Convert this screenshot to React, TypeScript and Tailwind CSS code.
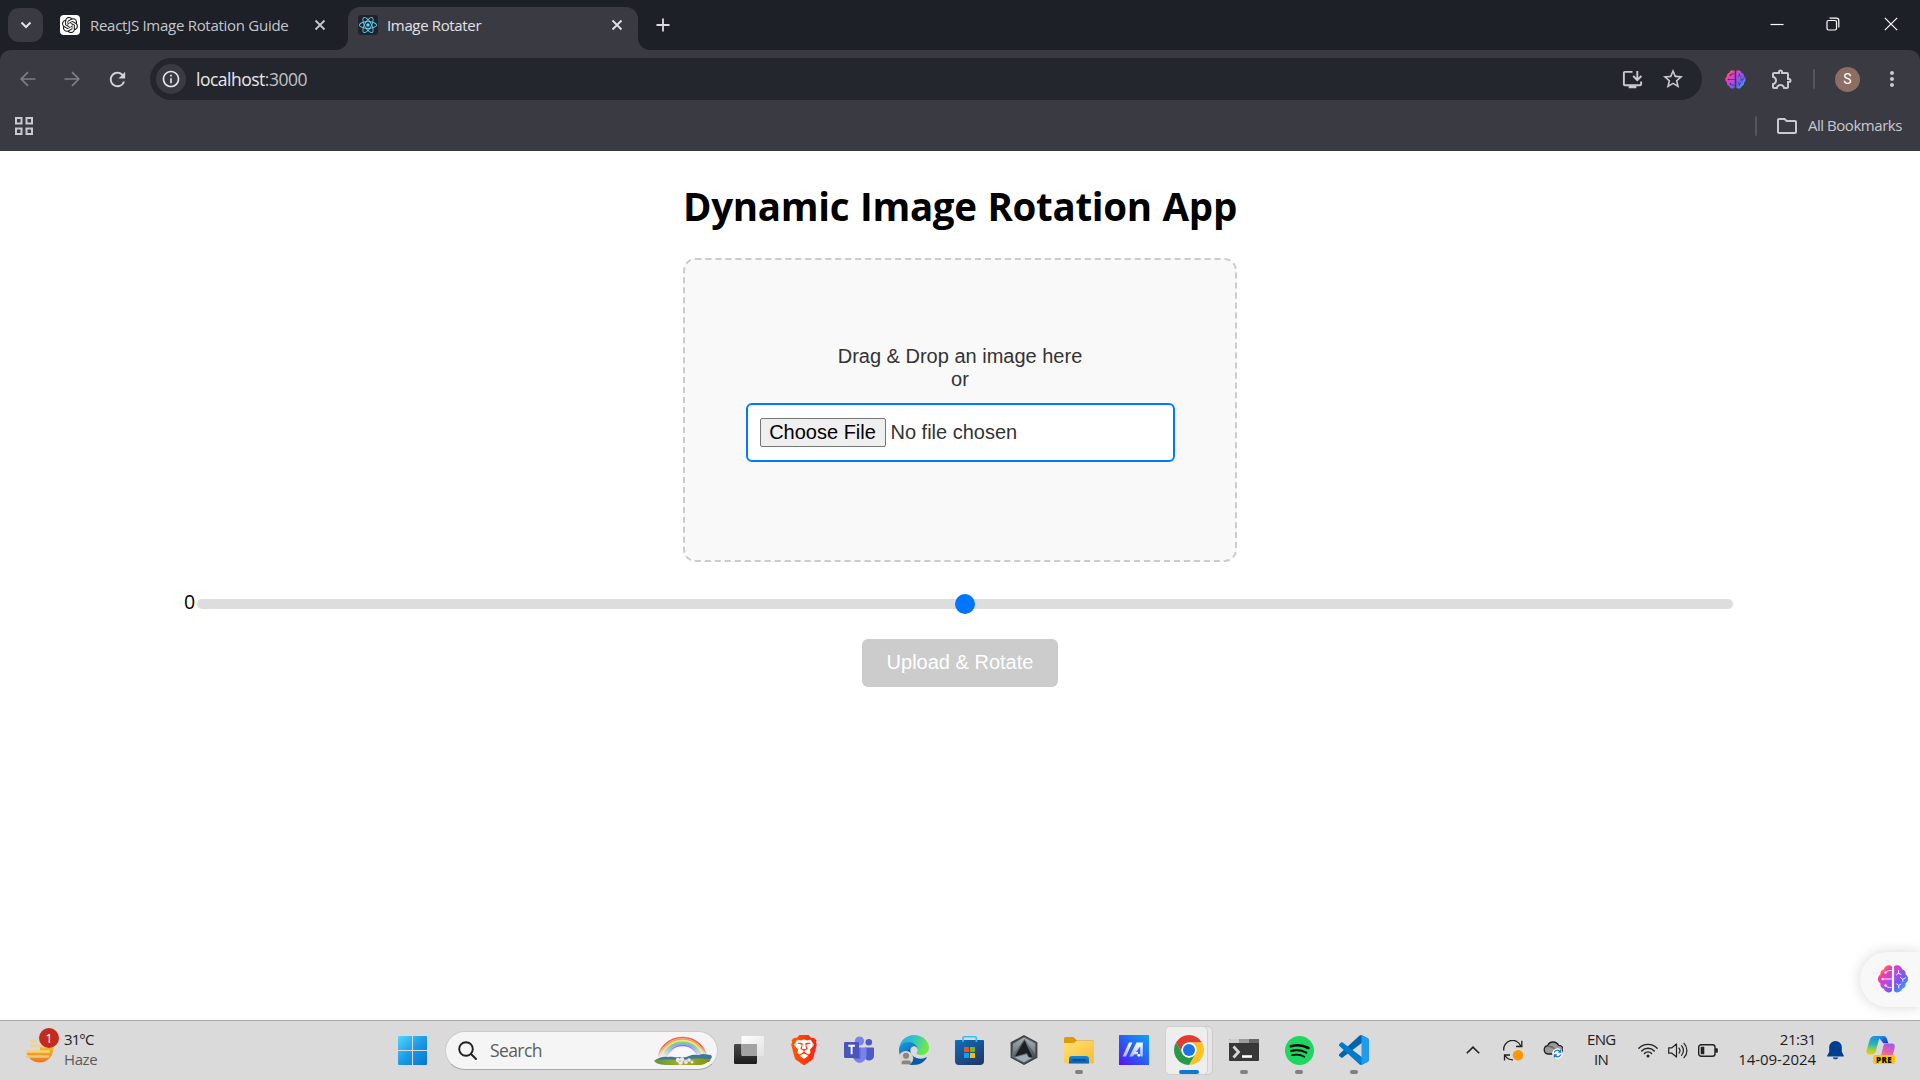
import type { ReactNode } from "react";
import { SiBrave, SiOpenai, SiReact } from "react-icons/si";
import {
  MdOutlineInstallDesktop,
  MdOutlineExtension,
  MdRefresh,
  MdOutlineFolder,
  MdStarOutline,
  MdMoreVert,
  MdInfoOutline,
} from "react-icons/md";

const UI = "font-['Open_Sans','Noto_Sans',sans-serif]";
const ARIAL = "font-['Liberation_Sans',Arial,sans-serif]";

/* ---------- shared drawings ---------- */

function Brain({ id, className, line }: { id: string; className: string; line: string }) {
  return (
    <svg viewBox="0 0 30 28" className={className} fill="none">
      <defs>
        <linearGradient id={id} x1="3" y1="2" x2="28" y2="25" gradientUnits="userSpaceOnUse">
          <stop offset="0" stopColor="#ff9a1f" />
          <stop offset="0.2" stopColor="#f838a8" />
          <stop offset="0.45" stopColor="#b44be8" />
          <stop offset="0.7" stopColor="#6a5cf0" />
          <stop offset="1" stopColor="#2fb4ff" />
        </linearGradient>
      </defs>
      <path
        fill={`url(#${id})`}
        d="M13.900 1.200C12.500 0 9.500-.3 7.500 1.500 6.500 2.400 6.200 3.200 6 4.300 3.500 4.600 2 6.800 2.400 9.600.9 10.500 0 12 0 14c0 2 .9 3.500 2.400 4.400-.3 2.700 1 5 3.500 5.400C6.600 26.300 9.200 28 12 27.200c.9-.3 1.500-.7 1.900-1.300zM16.100 1.200C17.500 0 20.500-.3 22.500 1.500c1 .9 1.300 1.700 1.500 2.800 2.500.3 4 2.500 3.600 5.300C29.100 10.500 30 12 30 14c0 2-.9 3.500-2.400 4.400.3 2.700-1 5-3.500 5.400-.7 2.500-3.300 4.200-6.100 3.400-.9-.3-1.500-.7-1.900-1.300z"
      />
      <g stroke={line} strokeWidth="1" strokeLinecap="round">
        <path d="M4.500 14H13.500M7.500 7.500C8.500 5.500 11 5.500 13 5.500M7.500 20.500c1 2 3.500 2 5.500 2" />
        <path d="M20.500 5.500v2.700l-2 1.600M20.500 8.200l2.500 1.300M22.500 12.500l2.300 1.800v2M24.800 14.300l2.700-1.500M18.500 18.800l2.300 1.700v2.500M20.800 20.500l2.200-1.500" />
      </g>
      <g fill={line}>
        <circle cx="4.700" cy="14" r="1.200" />
        <circle cx="7.500" cy="7.500" r="1.200" />
        <circle cx="7.500" cy="20.500" r="1.200" />
      </g>
    </svg>
  );
}

function CloseX({ className }: { className: string }) {
  return (
    <svg viewBox="0 0 12 12" className={className} fill="none" stroke="currentColor" strokeWidth="1.800">
      <path d="M1.500 1.500l9 9M10.500 1.500l-9 9" />
    </svg>
  );
}

/* ---------- browser chrome ---------- */

function TabStrip() {
  return (
    <div className="flex h-[50px] shrink-0 items-start bg-[#1d2027] text-[15px] text-[#c5c7cd]">
      <button className="mt-2 ml-2 flex h-[34px] w-[35px] items-center justify-center rounded-[11px] bg-[#393a42] text-[#e3e3e6]">
        <svg viewBox="0 0 12 8" className="h-[8px] w-[12px]" fill="none" stroke="currentColor" strokeWidth="2">
          <path d="M1.500 1.500L6 6l4.500-4.500" />
        </svg>
      </button>
      <div className="mt-[7px] ml-[17px] flex h-[36px] w-[288px] items-center">
        <span className="flex size-[20px] items-center justify-center rounded-[4px] bg-white text-[#1a1a1a]">
          <SiOpenai className="size-[16px]" />
        </span>
        <span className="ml-[10px] w-[224px] whitespace-nowrap tracking-[-0.28px]">ReactJS Image Rotation Guide</span>
        <CloseX className="size-[12px]" />
      </div>
      <div className="relative mt-[7px] flex h-[43px] w-[290px] items-start rounded-t-[12px] bg-[#393a42] text-[#e3e3e6]">
        <span className="absolute bottom-0 -left-3 size-3 bg-[radial-gradient(circle_at_0_0,transparent_11.5px,#393a42_12.5px)]" />
        <span className="absolute -right-3 bottom-0 size-3 bg-[radial-gradient(circle_at_100%_0,transparent_11.5px,#393a42_12.5px)]" />
        <div className="flex h-[36px] w-full items-center pl-[10px]">
          <span className="flex size-[20px] items-center justify-center rounded-[3px] bg-[#20232a] text-[#61dafb]">
            <SiReact className="size-[18px]" />
          </span>
          <span className="ml-[9px] w-[224px] whitespace-nowrap tracking-[-0.35px]">Image Rotater</span>
          <CloseX className="size-[12px]" />
        </div>
      </div>
      <svg viewBox="0 0 14 14" className="mt-[18px] ml-[18px] size-[14px]" fill="none" stroke="#dcdde2" strokeWidth="1.800">
        <path d="M7 .5v13M.5 7h13" />
      </svg>
      <div className="mt-[17px] mr-[22px] ml-auto flex items-center text-white">
        <svg viewBox="0 0 14 14" className="size-[14px]" fill="none" stroke="currentColor" strokeWidth="1.200">
          <path d="M.5 7.500h13" />
        </svg>
        <svg viewBox="0 0 14 14" className="ml-[42px] size-[14px]" fill="none" stroke="currentColor" strokeWidth="1.200">
          <rect x="1" y="3.500" width="9.500" height="9.500" rx="1.500" />
          <path d="M3.500 1.200H10.500a2.300 2.300 0 0 1 2.300 2.300V10.500" />
        </svg>
        <svg viewBox="0 0 14 14" className="ml-[44px] size-[14px]" fill="none" stroke="currentColor" strokeWidth="1.200">
          <path d="M.8.8l12.400 12.400M13.200.8L.8 13.200" />
        </svg>
      </div>
    </div>
  );
}

function Toolbar() {
  return (
    <div className="flex h-[58px] items-center">
      <div className="flex w-[150px] items-center pl-[20px]">
        <svg viewBox="0 0 16 16" className="size-[16px]" fill="none" stroke="#7d7f87" strokeWidth="1.700">
          <path d="M15.500 8H1.500M8 1.200L1.200 8 8 14.800" />
        </svg>
        <svg viewBox="0 0 16 16" className="ml-[28px] size-[16px]" fill="none" stroke="#7d7f87" strokeWidth="1.700">
          <path d="M.5 8h14M8 1.200L14.800 8 8 14.800" />
        </svg>
        <MdRefresh className="ml-[26px] size-[23px] text-[#d3d4da]" />
      </div>
      <div className="flex h-[42px] w-[1552px] items-center rounded-full bg-[#24262d] pl-[6px]">
        <span className="flex size-[30px] items-center justify-center rounded-full bg-[#393a42] text-[#e6e6e9]">
          <MdInfoOutline className="size-[20px]" />
        </span>
        <span className="ml-[10px] text-[17.500px] leading-[24px] tracking-[-0.5px] text-[#e8e8eb]">
          localhost<span className="text-[#c0c2c9]">:3000</span>
        </span>
        <MdOutlineInstallDesktop className="ml-auto size-[23px] text-[#c9cad0]" />
        <MdStarOutline className="mr-[17px] ml-[17px] size-[24px] text-[#c9cad0]" />
      </div>
      <Brain id="brain-toolbar" className="ml-[23px] h-[19px] w-[21px]" line="#3a2c6b" />
      <MdOutlineExtension className="ml-[24px] size-[24px] text-[#c9cad0]" />
      <span className="ml-[19px] h-[20px] w-[2px] rounded bg-[#54555e]" />
      <span className="ml-[20px] flex size-[25px] items-center justify-center rounded-full bg-[#8d6e63] font-['Roboto'] text-[14px] text-white">
        S
      </span>
      <MdMoreVert className="ml-[20px] size-[24px] text-[#c9cad0]" />
    </div>
  );
}

function BookmarksBar() {
  return (
    <div className="flex h-[43px] items-center pb-[8px] text-[#c9cad0]">
      <svg viewBox="0 0 18 18" className="ml-[15px] size-[18px]" fill="none" stroke="currentColor" strokeWidth="2">
        <rect x="1" y="1" width="5.500" height="5.500" />
        <rect x="11.500" y="1" width="5.500" height="5.500" />
        <rect x="1" y="11.500" width="5.500" height="5.500" />
        <rect x="11.500" y="11.500" width="5.500" height="5.500" />
      </svg>
      <span className="ml-auto h-[20px] w-[2px] rounded bg-[#54555e]" />
      <MdOutlineFolder className="ml-[18px] size-[24px]" />
      <span className="mr-[18px] ml-[9px] pb-px text-[15px] tracking-[-0.45px]">All Bookmarks</span>
    </div>
  );
}

/* ---------- page ---------- */

function Page() {
  return (
    <main className="relative flex min-h-0 flex-1 flex-col items-center bg-white">
      <h1 className="mt-[28px] h-[54px] text-[38.500px] leading-[54px] font-bold tracking-[-0.300px] whitespace-nowrap text-black [word-spacing:1px]">
        Dynamic Image Rotation App
      </h1>
      <div
        className={`mt-[25px] flex h-[304px] w-[554px] flex-col items-center rounded-[12.500px] border-2 border-dashed border-[#cccccc] bg-[#f9f9f9] pt-[85px] text-[20px] leading-[23px] text-[#333333] ${ARIAL}`}
      >
        <p>Drag &amp; Drop an image here</p>
        <p>or</p>
        <div className="mt-[12px] flex h-[59px] w-[429px] items-center rounded-[6px] border-2 border-[#007bff] bg-white pl-[12px]">
          <button className="flex h-[29px] w-[126px] items-center justify-center rounded-[2px] border border-[#767676] bg-[#efefef] text-black">
            Choose File
          </button>
          <span className="ml-[5px]">No file chosen</span>
        </div>
      </div>
      <div className="mt-[32px] mr-[3px] flex h-[20px] w-[1549px] items-center">
        <span className="w-[13px] pb-[5px] text-[19.500px] leading-[20px] text-black">0</span>
        <div className="relative h-[10px] flex-1 rounded-full bg-[#dddddd]">
          <span className="absolute top-1/2 left-1/2 size-[20px] -translate-x-1/2 -translate-y-1/2 rounded-full bg-[#0075ff]" />
        </div>
      </div>
      <button className={`mt-[25px] h-[48px] w-[196px] rounded-[6px] bg-[#cccccc] pb-[2px] text-[20px] text-white ${ARIAL}`}>
        Upload &amp; Rotate
      </button>
      <div className="absolute right-0 bottom-[13px] flex h-[55px] w-[60px] items-center rounded-l-full bg-[#f8f8f9] pb-[1px] pl-[18px] shadow-[0_0_14px_rgba(0,0,0,0.16)]">
        <Brain id="brain-float" className="h-[28px] w-[30px]" line="#f3e8ff" />
      </div>
    </main>
  );
}

/* ---------- taskbar icons ---------- */

function WeatherIcon() {
  return (
    <svg viewBox="0 0 30 28" className="h-[28px] w-[30px]">
      <defs>
        <linearGradient id="sun" x1="0" y1="0" x2="0" y2="1">
          <stop offset="0" stopColor="#f8bd2a" />
          <stop offset="1" stopColor="#ef7418" />
        </linearGradient>
      </defs>
      <path d="M1.500 16.500H15V12H28.500C29 20 23 27.500 15 27.500 8 27.500 2 23 1.500 16.500z" fill="url(#sun)" />
      <g stroke="#f3d47e" strokeWidth="2.400" strokeLinecap="round">
        <path d="M6.500 6h4M6.500 11h15M2 16.500h14" />
        <path d="M2 21.500h21" stroke="#e8c98a" />
        <path d="M17.500 16.500h6" />
      </g>
    </svg>
  );
}

function WindowsLogo() {
  return (
    <svg viewBox="0 0 29 29" className="mt-px size-[29px]">
      <defs>
        <linearGradient id="win" x1="0" y1="0" x2="1" y2="1">
          <stop offset="0" stopColor="#4fd8ff" />
          <stop offset="0.5" stopColor="#1c9ae6" />
          <stop offset="1" stopColor="#0674d3" />
        </linearGradient>
      </defs>
      <path
        fill="url(#win)"
        d="M1 0H14V14H0V1a1 1 0 0 1 1-1zM15 0H28a1 1 0 0 1 1 1V14H15zM0 15H14V29H1a1 1 0 0 1-1-1zM15 15H29V28a1 1 0 0 1-1 1H15z"
      />
    </svg>
  );
}

function Rainbow() {
  const bands = ["#f0625f", "#f7a04b", "#f7e46a", "#7fd08a", "#6fb2f2", "#8f72ea"];
  return (
    <svg viewBox="0 0 58 29" className="h-[29px] w-[58px]" fill="none">
      <defs>
        <linearGradient id="fade" x1="0" y1="0" x2="0" y2="1">
          <stop offset="0.45" stopColor="#fff" />
          <stop offset="1" stopColor="#000" />
        </linearGradient>
        <mask id="fade-mask">
          <rect width="58" height="22" fill="url(#fade)" />
        </mask>
        <linearGradient id="field" x1="0" y1="0" x2="1" y2="0">
          <stop offset="0" stopColor="#5f9440" />
          <stop offset="0.5" stopColor="#a6b32c" />
          <stop offset="1" stopColor="#7f9410" />
        </linearGradient>
      </defs>
      <g mask="url(#fade-mask)">
        <ellipse cx="28.500" cy="22" rx="16.500" ry="13" fill="#fbfbff" />
        {bands.map((c, i) => (
          <ellipse key={c} cx="28.500" cy="25" rx={24.500 - i * 1.600} ry={23.500 - i * 1.600} stroke={c} strokeWidth="1.700" />
        ))}
      </g>
      <path d="M1 24c5-3 9-4 13-3 4-1 8 1 11 0 4 1 8 0 10-1 4-2 8-1 10-1 4-2 8 0 12 0l1 2-3 5H4z" fill="#3b78a0" />
      <path d="M0 24.500c10-2 18 0 28-1s20-1.500 28-.5c-2 4-6 6-12 6H14C7 29 2 28 0 24.500z" fill="url(#field)" />
      <g fill="#efe6fb">
        <circle cx="24" cy="24" r="2.200" />
        <circle cx="28" cy="23.500" r="2.200" />
        <circle cx="26.500" cy="26.500" r="2.200" />
        <circle cx="32" cy="26" r="2" />
        <circle cx="35" cy="24" r="1.800" />
        <circle cx="38" cy="26" r="1.500" />
      </g>
      <circle cx="26" cy="25" r="1" fill="#f3c24b" />
      <circle cx="33.500" cy="25.300" r=".9" fill="#f3c24b" />
    </svg>
  );
}

function TaskViewIcon() {
  return (
    <svg viewBox="0 0 30 30" className="size-[30px]">
      <defs>
        <linearGradient id="tv-dark" x1="0" y1="0" x2="0" y2="1">
          <stop offset="0" stopColor="#4a4a4a" />
          <stop offset="1" stopColor="#1c1c1c" />
        </linearGradient>
        <linearGradient id="tv-light" x1="0" y1="0" x2="1" y2="1">
          <stop offset="0" stopColor="#fff" />
          <stop offset="1" stopColor="#e2e2e2" />
        </linearGradient>
      </defs>
      <rect x="0" y="9" width="23" height="20" rx="1.200" fill="url(#tv-dark)" />
      <rect x="7.500" y="1" width="22.500" height="20" rx="1.200" fill="url(#tv-light)" />
      <path d="M8 9h15v12H9a1 1 0 0 1-1-1z" fill="#a3a3a3" />
    </svg>
  );
}

function BraveIcon() {
  return (
    <span className="relative flex size-[30px] items-center justify-center">
      <svg className="absolute size-0">
        <linearGradient id="brave" x1="0" y1="0" x2="1" y2="0">
          <stop offset="0" stopColor="#ff5a00" />
          <stop offset="1" stopColor="#ff1f0f" />
        </linearGradient>
      </svg>
      <span className="absolute h-[22px] w-[16px] rounded-b-full bg-white" />
      <SiBrave className="relative size-[30px]" fill="url(#brave)" color="url(#brave)" />
    </span>
  );
}

function TeamsIcon() {
  return (
    <svg viewBox="0 0 30 28" className="h-[28px] w-[30px]">
      <circle cx="24.800" cy="6.300" r="3.300" fill="#5059c9" />
      <path d="M21 11.500h8a1 1 0 0 1 1 1v7a5 5 0 0 1-9 3z" fill="#5059c9" />
      <circle cx="15.500" cy="5" r="4.600" fill="#7b83eb" />
      <path d="M10 11.500h11.500a1 1 0 0 1 1 1V19a7.500 7.500 0 0 1-7.300 8A7.500 7.500 0 0 1 9 19z" fill="#7b83eb" />
      <path d="M9 11.500h7.500V22a1 1 0 0 1-1 1H10z" fill="#3f46a8" opacity=".45" />
      <rect x="0" y="6" width="15" height="16" rx="1.200" fill="#4b53bc" />
      <path d="M4.300 9.800h6.600M7.600 9.800v8.500" stroke="#fff" strokeWidth="1.900" />
    </svg>
  );
}

function EdgeIcon() {
  return (
    <svg viewBox="0 0 256 256" className="size-[30px]">
      <defs>
        <linearGradient id="edge-a" x1="0" y1="0" x2="1" y2="0.300">
          <stop offset="0" stopColor="#2aa6e0" />
          <stop offset="0.5" stopColor="#2fc3c9" />
          <stop offset="1" stopColor="#6fe84a" />
        </linearGradient>
        <linearGradient id="edge-b" x1="0" y1="0" x2="0.600" y2="1">
          <stop offset="0" stopColor="#1b9de2" />
          <stop offset="1" stopColor="#0b5cab" />
        </linearGradient>
      </defs>
      <path
        fill="#0c59a4"
        d="M231.100 190.500c-3.400 1.800-6.900 3.400-10.500 4.700-11.500 4.300-23.600 6.500-35.900 6.500-47.300 0-88.500-32.500-88.500-74.300.1-11.400 6.400-21.900 16.400-27.300-42.800 1.800-53.800 46.400-53.800 72.500 0 73.900 68.100 81.400 82.800 81.400 7.900 0 19.800-2.300 27-4.600l1.300-.4c27.600-9.500 51.100-28.100 66.600-52.800 1.200-1.900.6-4.300-1.200-5.500-1.300-.8-2.900-.9-4.200-.2z"
      />
      <path
        fill="url(#edge-b)"
        d="M105.700 241.400c-8.900-5.500-16.600-12.800-22.700-21.300-26.300-36-18.400-86.500 17.600-112.800 3.800-2.700 7.700-5.200 11.900-7.200 3.100-1.500 8.400-4.100 15.500-4 10.100.1 19.600 4.900 25.700 13 4 5.400 6.300 11.900 6.400 18.700 0-.2 24.500-79.600-80-79.600-43.900 0-80 41.700-80 78.200-.2 19.300 4 38.500 12.100 56 27.600 58.800 94.800 87.600 156.400 67.100-21.100 6.600-44.100 3.700-62.900-8.100z"
      />
      <path
        fill="url(#edge-a)"
        d="M152.300 148.900c-.9 1-3.400 2.500-3.400 5.600 0 2.600 1.700 5.200 4.800 7.300 14.300 10 41.400 8.600 41.500 8.600 10.700 0 21.100-2.900 30.300-8.300 18.800-11 30.400-31.100 30.400-52.900.3-22.400-8-37.300-11.300-43.900C223.500 23.900 177.700 0 128 0 58 0 1 56.200 0 126.200c.5-36.500 36.800-66 80-66 3.500 0 23.500.3 42 10.100 16.300 8.600 24.900 18.900 30.800 29.200 6.200 10.700 7.300 24.100 7.300 29.500 0 5.400-2.700 13.300-7.800 19.900z"
      />
      <circle cx="60" cy="198" r="62" fill="#d6d3d0" />
      <circle cx="60" cy="178" r="26" fill="#8a8581" />
      <path d="M22 250v-14a18 18 0 0 1 18-18h44a18 18 0 0 1 18 18v14z" fill="#8a8581" />
    </svg>
  );
}

function StoreIcon() {
  return (
    <svg viewBox="0 0 29 29" className="size-[29px]">
      <defs>
        <linearGradient id="store" x1="0" y1="0" x2="0.700" y2="1">
          <stop offset="0" stopColor="#0c6fbe" />
          <stop offset="1" stopColor="#22396b" />
        </linearGradient>
      </defs>
      <path d="M0 5a1 1 0 0 1 1-1h27a1 1 0 0 1 1 1v20a4 4 0 0 1-4 4H4a4 4 0 0 1-4-4z" fill="url(#store)" />
      <path d="M8 6V2a1.200 1.200 0 0 1 1.200-1.200h11A1.200 1.200 0 0 1 21.400 2v4" fill="none" stroke="#2fc4f5" strokeWidth="1.600" />
      <path d="M9 11h5v5H9z" fill="#f25022" />
      <path d="M15 11h5v5h-5z" fill="#7fba00" />
      <path d="M9 17h5v5H9z" fill="#00a4ef" />
      <path d="M15 17h5v5h-5z" fill="#ffb900" />
    </svg>
  );
}

function ArmouryIcon() {
  return (
    <svg viewBox="0 0 28 30" className="h-[30px] w-[28px]">
      <defs>
        <linearGradient id="arm" x1="0" y1="0" x2="1" y2="1">
          <stop offset="0" stopColor="#3a4147" />
          <stop offset="0.5" stopColor="#6a737b" />
          <stop offset="1" stopColor="#3a4148" />
        </linearGradient>
        <linearGradient id="arm-rim" x1="0" y1="0" x2="0" y2="1">
          <stop offset="0" stopColor="#c2c9ce" />
          <stop offset="1" stopColor="#6f7981" />
        </linearGradient>
      </defs>
      <path d="M14 .7l12.800 7v14.600L14 29.300l-12.800-7V7.700z" fill="url(#arm)" stroke="#383e44" strokeWidth="1.200" />
      <path d="M14 2.500l11 6.200V19L14.500 4 3 20V8.700z" fill="url(#arm-rim)" opacity=".75" />
      <path d="M14.500 5.500L4.800 21.500l12-3.500 2.500 4h3.200z" fill="#1b1f23" />
      <path d="M5 22.500l11.500-3.300 2 3.300 3.500.5-8 4.300z" fill="#a3acb3" />
    </svg>
  );
}

function ExplorerIcon() {
  return (
    <svg viewBox="0 0 30 27" className="h-[27px] w-[30px]">
      <defs>
        <linearGradient id="fold" x1="0" y1="0" x2="1" y2="1">
          <stop offset="0" stopColor="#ffe07a" />
          <stop offset="1" stopColor="#fcbd2a" />
        </linearGradient>
        <linearGradient id="tray" x1="0" y1="0" x2="0" y2="1">
          <stop offset="0" stopColor="#1687d9" />
          <stop offset="1" stopColor="#0a5fb0" />
        </linearGradient>
      </defs>
      <path d="M0 1.500A1.500 1.500 0 0 1 1.500 0h8l3.500 3.500H29a1 1 0 0 1 1 1V10H0z" fill="#dc9a0c" />
      <path d="M0 6h10l2.500-2H29a1 1 0 0 1 1 1v20.500a1 1 0 0 1-1 1H1a1 1 0 0 1-1-1z" fill="url(#fold)" />
      <path d="M5 26.500V22a3 3 0 0 1 3-3h14a3 3 0 0 1 3 3v4.500z" fill="url(#tray)" />
      <path d="M9 23h12" stroke="#0b3f7c" strokeWidth="1.400" strokeLinecap="round" />
    </svg>
  );
}

function MyAsusIcon() {
  return (
    <svg viewBox="0 0 30 30" className="size-[30px]">
      <defs>
        <linearGradient id="asus" x1="1" y1="0" x2="0" y2="1">
          <stop offset="0" stopColor="#0aa5fb" />
          <stop offset="0.550" stopColor="#2b58f5" />
          <stop offset="1" stopColor="#5a12f2" />
        </linearGradient>
        <linearGradient id="asus-m" x1="0" y1="0" x2="0" y2="1">
          <stop offset="0" stopColor="#fff" />
          <stop offset="1" stopColor="#a8b6fb" />
        </linearGradient>
      </defs>
      <path d="M0 0h30v30H0z" fill="url(#asus)" />
      <path d="M10 7.500h3.400L7 21.500H3.500zM17.500 7.500h6.300v14h-2.600V11.500L13.800 21.500h-3.500z" fill="url(#asus-m)" />
      <path d="M15.500 17h3.500v2.500h-5.300z" fill="url(#asus-m)" />
      <circle cx="19.800" cy="20.300" r="1.400" fill="#fff" />
    </svg>
  );
}

function ChromeIcon() {
  return (
    <svg viewBox="2 2 44 44" className="size-[30px]">
      <circle cx="24" cy="24" r="12" fill="#fff" />
      <path d="M24 13H43.050A22 22 0 0 0 4.950 13L14.470 29.500A11 11 0 0 1 24 13Z" fill="#e33b2e" />
      <path d="M33.530 29.500L24 46A22 22 0 0 0 43.050 13H24A11 11 0 0 1 33.530 29.500Z" fill="#fcc31e" />
      <path d="M14.470 29.500L4.950 13A22 22 0 0 0 24 46L33.530 29.500A11 11 0 0 1 14.470 29.500Z" fill="#27994a" />
      <circle cx="24" cy="24" r="11" fill="#fff" />
      <circle cx="24" cy="24" r="8.800" fill="#1a73e8" />
    </svg>
  );
}

function TerminalIcon() {
  return (
    <svg viewBox="0 0 30 22" className="h-[22px] w-[30px]">
      <rect width="30" height="22" rx="1" fill="#383838" />
      <path d="M1 0h9v4H0V1a1 1 0 0 1 1-1z" fill="#cfcfcf" />
      <path d="M10 0h10v4H10z" fill="#9b9b9b" />
      <path d="M20 0h9a1 1 0 0 1 1 1v3H20z" fill="#666" />
      <path d="M4.500 7.500l5 5.500-5 5.500" fill="none" stroke="#d6d6d6" strokeWidth="2.800" />
      <path d="M13 17.500h10" stroke="#fff" strokeWidth="2.600" />
    </svg>
  );
}

function SpotifyIcon() {
  return (
    <svg viewBox="0 0 29 29" className="size-[29px]" fill="none" stroke="#0b0b0b" strokeLinecap="round">
      <circle cx="14.500" cy="14.500" r="14.500" fill="#1ed760" stroke="none" />
      <path d="M5.800 10.300c6-1.700 12.500-1.100 17.600 1.700" strokeWidth="2.600" />
      <path d="M6.300 14.900c5-1.500 10.600-.8 15 1.700" strokeWidth="2.200" />
      <path d="M7 19.200c4.200-1.100 8.700-.6 12.300 1.500" strokeWidth="1.800" />
    </svg>
  );
}

function VsCodeIcon() {
  return (
    <svg viewBox="0 0 100 100" className="size-[30px]">
      <path
        fill="#0065a9"
        d="M96.461 10.796L75.857.876C73.472-.273 70.622.212 68.750 2.083L1.299 63.583c-1.815 1.654-1.813 4.511.004 6.162l5.510 5.009c1.485 1.350 3.722 1.450 5.321.237L93.361 13.370C96.086 11.303 100 13.246 100 16.667v-.24c0-2.400-1.375-4.589-3.539-5.631z"
      />
      <path
        fill="#007acc"
        d="M96.461 89.204l-20.604 9.921c-2.385 1.148-5.235.663-7.107-1.208L1.299 36.417c-1.815-1.654-1.813-4.511.004-6.162l5.510-5.009c1.485-1.350 3.722-1.450 5.321-.237L93.361 86.630C96.086 88.697 100 86.754 100 83.333v.24c0 2.400-1.375 4.589-3.539 5.631z"
      />
      <path
        fill="#1f9cf0"
        d="M75.858 99.126c-2.386 1.148-5.236.662-7.108-1.209C71.056 100.223 75 98.590 75 95.328V4.672C75 1.410 71.056-.223 68.750 2.083 70.622.211 73.472-.274 75.858.874l20.601 9.907C98.623 11.822 100 14.011 100 16.413v67.174c0 2.402-1.377 4.592-3.541 5.633z"
      />
    </svg>
  );
}

type TaskbarApp = { name: string; icon: ReactNode; running?: boolean; active?: boolean };

const apps: TaskbarApp[] = [
  { name: "Task view", icon: <TaskViewIcon /> },
  { name: "Brave", icon: <BraveIcon /> },
  { name: "Teams", icon: <TeamsIcon /> },
  { name: "Edge", icon: <EdgeIcon /> },
  { name: "Store", icon: <StoreIcon /> },
  { name: "Armoury Crate", icon: <ArmouryIcon /> },
  { name: "Explorer", icon: <ExplorerIcon />, running: true },
  { name: "MyASUS", icon: <MyAsusIcon /> },
  { name: "Chrome", icon: <ChromeIcon />, active: true },
  { name: "Terminal", icon: <TerminalIcon />, running: true },
  { name: "Spotify", icon: <SpotifyIcon />, running: true },
  { name: "VS Code", icon: <VsCodeIcon />, running: true },
];

function AppCell({ app }: { app: TaskbarApp }) {
  return (
    <div className="relative flex h-full w-[55px] items-center justify-center">
      {app.active && (
        <>
          <span className="absolute top-[5px] left-[9.500px] h-[49px] w-[42px] rounded-[5px] border border-[#cbcbcb] bg-[#e6e6e6]" />
          <span className="absolute top-[5px] left-[3.500px] h-[49px] w-[43px] rounded-[5px] border border-[#d0d0d0] bg-[#eeeeee]" />
          <span className="absolute top-[49px] left-[17.500px] h-[4px] w-[20px] rounded-full bg-[#0a7ad6]" />
        </>
      )}
      {app.running && <span className="absolute top-[49px] left-[23.500px] h-[4px] w-[8px] rounded-full bg-[#808080]" />}
      <span className="relative">{app.icon}</span>
    </div>
  );
}

/* ---------- tray icons ---------- */

function SyncDot() {
  return (
    <svg viewBox="0 0 20 21" className="h-[21px] w-[20px]" fill="none" stroke="#1f1f1f" strokeWidth="1.300">
      <path d="M.8 10.500a8.800 8.800 0 0 1 17-4.200M18.800.8v5.700h-5.700" />
      <path d="M7 15h-5.500v5.500M2 15.500a9 9 0 0 0 8 4.300" />
      <circle cx="15" cy="15.300" r="5.200" fill="#ff9500" stroke="none" />
    </svg>
  );
}

function CloudSync() {
  return (
    <svg viewBox="0 0 20 18" className="h-[18px] w-[20px]" fill="none">
      <path d="M5 13A4.200 4.200 0 0 1 4.600 4.700 6 6 0 0 1 15.500 4.300 4.300 4.300 0 0 1 16 13z" fill="#9b9b9b" stroke="#1f1f1f" strokeWidth="1.300" />
      <path d="M5 5.500c4-.5 6 1 8 4" stroke="#6b6b6b" strokeWidth="1.500" />
      <circle cx="14.500" cy="12.500" r="5.300" fill="#fff" />
      <path d="M11.200 11.500a3.500 3.500 0 0 1 6-1M17.700 8.500v2.600h-2.500M17.800 13.500a3.500 3.500 0 0 1-6 1M11.300 16.500v-2.600h2.500" stroke="#1673d1" strokeWidth="1.200" />
    </svg>
  );
}

function Wifi() {
  return (
    <svg viewBox="0 0 20 16" className="h-[16px] w-[20px]" fill="none" stroke="#222" strokeWidth="1.400" strokeLinecap="round">
      <path d="M.9 6.300a12.600 12.600 0 0 1 18.200 0M3.700 8.900a8.900 8.900 0 0 1 12.600 0M6.400 11.500a5.200 5.200 0 0 1 7.200 0" />
      <circle cx="10" cy="14" r="1.500" fill="#222" stroke="none" />
    </svg>
  );
}

function Speaker() {
  return (
    <svg viewBox="0 0 20 17" className="h-[17px] w-[20px]" fill="none" stroke="#222" strokeWidth="1.200" strokeLinecap="round" strokeLinejoin="round">
      <path d="M.7 5.800h3.200L8.500 2v13L3.900 11.200H.7z" />
      <path d="M11 6a4 4 0 0 1 0 5M13.500 3.700a7 7 0 0 1 0 9.600M16 1.300a10.300 10.300 0 0 1 0 14.400" />
    </svg>
  );
}

function Battery() {
  return (
    <svg viewBox="0 0 20 13" className="h-[13px] w-[20px]" fill="none">
      <rect x=".7" y=".7" width="16.300" height="11.600" rx="2.500" stroke="#222" strokeWidth="1.400" />
      <rect x="2.700" y="2.800" width="3.600" height="7.400" rx=".6" fill="#222" />
      <path d="M17 4.300h2.200a.6.600 0 0 1 .6.600v3.200a.6.600 0 0 1-.6.600H17z" fill="#222" />
    </svg>
  );
}

function Bell() {
  return (
    <svg viewBox="0 0 17 19" className="h-[19px] w-[17px]" fill="#003e92">
      <path d="M8.500 0a6.200 6.200 0 0 1 6.300 6.200v4.600l1.900 3.700a.6.600 0 0 1-.5 1H.8a.6.600 0 0 1-.5-1l1.900-3.700V6.200A6.200 6.200 0 0 1 8.500 0zM5.700 16.500h5.600a2.900 2.500 0 0 1-5.600 0z" />
    </svg>
  );
}

function Copilot() {
  return (
    <div className="relative size-[30px]">
      <svg viewBox="0 0 30 30" className="size-[30px]">
        <defs>
          <linearGradient id="cp-a" x1="0.300" y1="0" x2="0.200" y2="1">
            <stop offset="0" stopColor="#1d8fe0" />
            <stop offset="0.400" stopColor="#22b6b8" />
            <stop offset="0.750" stopColor="#a3cf3f" />
            <stop offset="1" stopColor="#f7c800" />
          </linearGradient>
          <linearGradient id="cp-b" x1="0.800" y1="0" x2="0.400" y2="1">
            <stop offset="0" stopColor="#9a5cf0" />
            <stop offset="0.500" stopColor="#e05bb8" />
            <stop offset="1" stopColor="#ff8a5c" />
          </linearGradient>
          <linearGradient id="cp-c" x1="0" y1="0" x2="1" y2="1">
            <stop offset="0" stopColor="#2ea7ea" />
            <stop offset="1" stopColor="#0c38c4" />
          </linearGradient>
        </defs>
        <path d="M8 1h9.500c2.300 0 3 1.400 3.600 3.300L22.300 8.300h-5L14 4z" fill="url(#cp-c)" />
        <path d="M8.500 1H16c-2 .6-2.700 2.300-3.300 4.500L10.300 14.500C9.500 18 8.500 19.500 5.500 19.500H3.200C.8 19.500 0 17.800.7 15L3.500 5.300C4.300 2.600 5.800 1 8.500 1z" fill="url(#cp-a)" />
        <path d="M19.500 8.500h6c2.700 0 3.800 1.500 3.200 4.200L26.800 20c-.6 2.200-1.800 3.500-4 3.500H12c2-.6 2.700-1.800 3.300-4.200l2-8c.5-1.800 1-2.800 2.200-2.800z" fill="url(#cp-b)" />
      </svg>
      <span className="absolute top-[20px] left-[7px] flex h-[9px] w-[22px] items-center justify-center rounded-[2px] bg-[#ffc400] text-[8px] leading-[9px] font-extrabold tracking-[0.3px] text-black">
        PRE
      </span>
    </div>
  );
}

function Taskbar() {
  return (
    <footer className="flex h-[60px] shrink-0 items-center border-t border-[#a9a9a9] bg-[#dadada] pb-px text-[15px] leading-[20px] text-[#1d1d1d]">
      <div className="flex w-[398px] items-center">
        <div className="relative ml-[25px] h-[34px] w-[34px]">
          <span className="absolute top-[2px] left-0">
            <WeatherIcon />
          </span>
          <span className="absolute -top-[5px] left-[14px] flex size-[20px] items-center justify-center rounded-full bg-[#c42b1c] text-[13px] leading-[20px] text-white">
            1
          </span>
        </div>
        <div className="ml-[5px] pb-[3px]">
          <p className="tracking-[-0.900px]">31°C</p>
          <p className="tracking-[-0.400px] text-[#5a5a5a]">Haze</p>
        </div>
      </div>
      <WindowsLogo />
      <div className="ml-[18px] flex h-[39px] w-[273px] items-center rounded-full border border-[#cccccc] border-b-[#a8a8a8] bg-[#f5f5f5] pl-[12px]">
        <svg viewBox="0 0 19 19" className="size-[19px]" fill="none" stroke="#202020" strokeWidth="1.900" strokeLinecap="round">
          <circle cx="8" cy="8" r="6.800" />
          <path d="M13 13l5 5" />
        </svg>
        <span className="ml-[13px] pb-px text-[17.500px] tracking-[-0.600px] text-[#5c5c5c]">Search</span>
        <span className="mr-[5px] ml-auto">
          <Rainbow />
        </span>
      </div>
      <div className="ml-[3.500px] flex h-full">
        {apps.map((a) => (
          <AppCell key={a.name} app={a} />
        ))}
      </div>
      <div className="ml-auto flex items-center">
        <svg viewBox="0 0 14 8" className="h-[8px] w-[14px]" fill="none" stroke="#1f1f1f" strokeWidth="1.600">
          <path d="M.8 7.200L7 1.200l6.200 6" />
        </svg>
        <span className="ml-[23px]">
          <SyncDot />
        </span>
        <span className="ml-[20px]">
          <CloudSync />
        </span>
        <div className="ml-[24px] w-[28px] pb-[2px] text-center tracking-[-0.700px]">
          <p>ENG</p>
          <p>IN</p>
        </div>
        <span className="ml-[23px]">
          <Wifi />
        </span>
        <span className="ml-[10px]">
          <Speaker />
        </span>
        <span className="ml-[10px]">
          <Battery />
        </span>
        <div className="ml-[16px] w-[82px] pb-[3px] text-right">
          <p className="tracking-[-0.400px]">21:31</p>
          <p className="tracking-[-0.050px]">14-09-2024</p>
        </div>
        <span className="ml-[11px]">
          <Bell />
        </span>
        <span className="mr-[24px] ml-[22px]">
          <Copilot />
        </span>
      </div>
    </footer>
  );
}

export default function App() {
  return (
    <div className={`flex h-[1080px] w-[1920px] flex-col overflow-hidden bg-[#1d2027] ${UI}`}>
      <TabStrip />
      <header className="h-[101px] shrink-0 rounded-t-[10px] bg-[#393a42]">
        <Toolbar />
        <BookmarksBar />
      </header>
      <Page />
      <Taskbar />
    </div>
  );
}
